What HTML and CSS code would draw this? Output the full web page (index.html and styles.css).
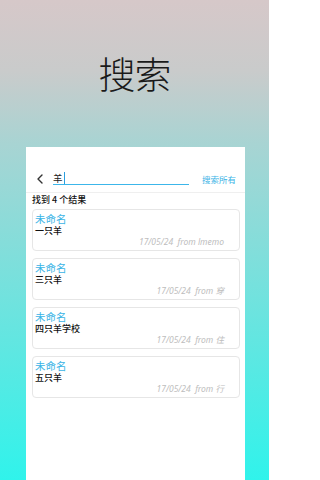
FILE: index.html
```html
<!DOCTYPE html>
<html lang="zh">
<head>
<meta charset="utf-8">
<title>搜索</title>
<link rel="stylesheet" href="styles.css">
</head>
<body>
<div class="screen">
  <header class="header">
    <h1 class="title">搜索</h1>
  </header>
  <main class="panel">
    <div class="search-row">
      <svg class="back" width="6" height="10" viewBox="0 0 6 10"><polyline points="5,1 1,5 5,9" fill="none" stroke="#333" stroke-width="1.4" stroke-linecap="round" stroke-linejoin="round"/></svg>
      <div class="input"><span class="query">羊</span><span class="caret"></span></div>
      <span class="search-all">搜索所有</span>
    </div>
    <div class="divider"></div>
    <div class="count">找到 4 个结果</div>
    <div class="list">
      <div class="card">
        <div class="card-title">未命名</div>
        <div class="card-body">一只羊</div>
        <div class="card-meta">17/05/24&nbsp;&nbsp;from lmemo</div>
      </div>
      <div class="card">
        <div class="card-title">未命名</div>
        <div class="card-body">三只羊</div>
        <div class="card-meta">17/05/24&nbsp;&nbsp;from 穿</div>
      </div>
      <div class="card">
        <div class="card-title">未命名</div>
        <div class="card-body">四只羊学校</div>
        <div class="card-meta">17/05/24&nbsp;&nbsp;from 住</div>
      </div>
      <div class="card">
        <div class="card-title">未命名</div>
        <div class="card-body">五只羊</div>
        <div class="card-meta">17/05/24&nbsp;&nbsp;from 行</div>
      </div>
    </div>
  </main>
</div>
</body>
</html>
```

FILE: styles.css
```css
html, body {
  margin: 0;
  padding: 0;
}
body {
  font-family: "Noto Sans", "Noto Sans CJK SC", sans-serif;
  width: 269px;
  height: 480px;
  overflow: hidden;
}
.screen {
  width: 269px;
  height: 480px;
  display: flex;
  flex-direction: column;
  background: linear-gradient(to bottom, #d6c8c9 0%, #c9cbcb 15%, #a8d4d3 30%, #30f3eb 100%);
}
.header {
  height: 147px;
  display: flex;
  align-items: center;
  justify-content: center;
  flex: none;
}
.title {
  margin: 0;
  margin-top: -1px;
  font-family: "Noto Sans CJK SC", sans-serif;
  font-weight: 300;
  font-size: 37px;
  line-height: 40px;
  color: #1a1a1a;
  letter-spacing: -1px;
}
.panel {
  flex: 1;
  margin: 0 24px 0 26px;
  background: #fff;
  display: flex;
  flex-direction: column;
}
.search-row {
  margin-top: 25px;
  height: 13px;
  display: flex;
  align-items: center;
}
.back {
  margin-left: 11px;
  flex: none;
}
.input {
  margin-left: 10px;
  width: 136px;
  height: 12px;
  border-bottom: 1.5px solid #3cb6ea;
  display: flex;
  align-items: center;
  align-self: flex-start;
}
.query {
  font-family: "Noto Sans CJK SC", sans-serif;
  font-size: 9.5px;
  line-height: 12px;
  color: #222;
}
.caret {
  width: 1px;
  height: 12px;
  background: #2a9fe0;
  margin-left: 1px;
}
.search-all {
  margin-left: 13px;
  font-family: "Noto Sans CJK SC", sans-serif;
  font-size: 8.5px;
  line-height: 12px;
  color: #3ab4e6;
  white-space: nowrap;
}
.divider {
  margin-top: 7px;
  height: 1px;
  background: #efefef;
}
.count {
  margin: 1px 0 0 6px;
  font-family: "Noto Sans CJK SC", sans-serif;
  font-size: 9px;
  line-height: 12px;
  font-weight: 500;
  color: #111;
}
.list {
  margin: 3px 5px 0 6px;
  display: flex;
  flex-direction: column;
  gap: 7px;
}
.card {
  border: 1px solid #e6e6e6;
  border-radius: 4px;
  padding: 3px 15px 2px 2px;
}
.card-title {
  font-family: "Noto Sans CJK SC", sans-serif;
  font-size: 10.5px;
  line-height: 12px;
  color: #3ab4e6;
}
.card-body {
  font-family: "Noto Sans CJK SC", sans-serif;
  font-size: 9px;
  line-height: 11px;
  font-weight: 500;
  color: #111;
}
.card-meta {
  font-family: "Noto Sans", "Noto Sans CJK SC", sans-serif;
  font-style: italic;
  font-size: 8.5px;
  line-height: 12px;
  color: #bdbdbd;
  text-align: right;
}
```
